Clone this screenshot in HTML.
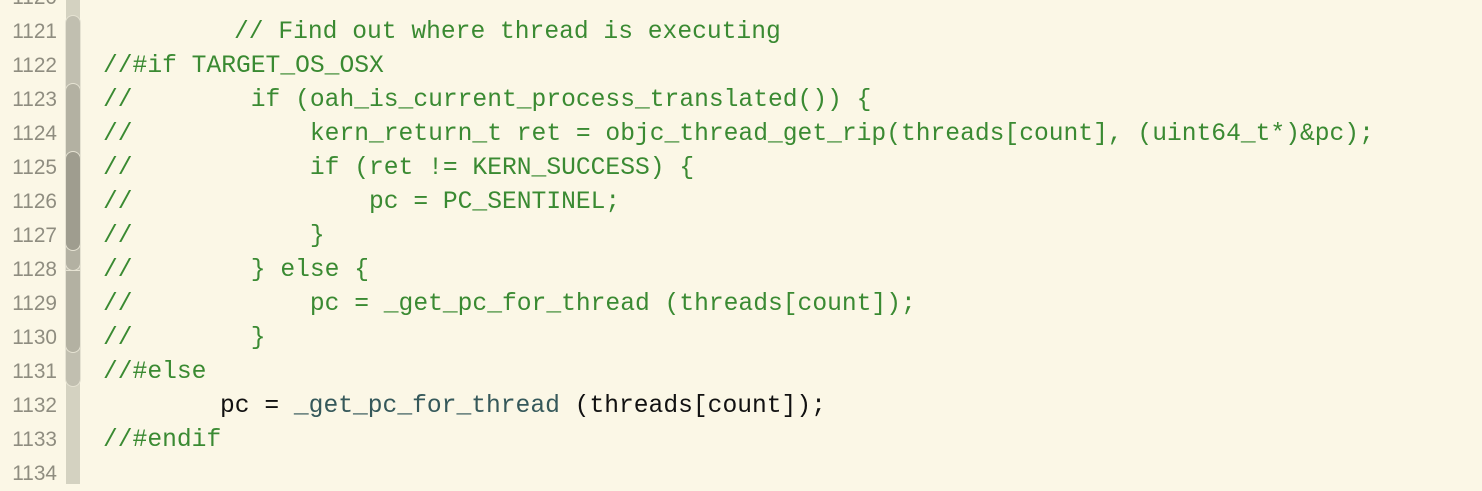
<html><head><style>
body{margin:0;width:1482px;height:484px;background:#fbf7e6;overflow:hidden;position:relative;font-family:"Liberation Mono",monospace}
.n{position:absolute;right:1425px;font-family:"Liberation Sans",sans-serif;font-size:20.8px;color:#8f8d80;line-height:34px;text-align:right;width:60px}
.c{position:absolute;left:103px;font-size:24.63px;line-height:34px;white-space:pre;color:#3a8a32}
.k{color:#111}.f{color:#35585a}
.g{position:absolute;left:66px;width:14px}
</style></head><body>
<div class="g" style="top:0;height:484px;background:#d4d2c1"></div>
<div class="g" style="top:16px;height:370px;background:#c1bfb0;border-radius:7px;box-shadow:0 0 0 1px #e6e3d3"></div>
<div class="g" style="top:84px;height:186px;background:#b3b1a2;border-radius:7px;box-shadow:0 0 0 1px #e6e3d3"></div>
<div class="g" style="top:271px;height:81px;background:#b3b1a2;border-radius:0 0 7px 7px;box-shadow:0 0 0 1px #e6e3d3"></div>
<div class="g" style="top:152px;height:98px;background:#9f9d8f;border-radius:7px;box-shadow:0 0 0 1px #e6e3d3"></div>
<div class="n" style="top:-19px">1120</div>
<div class="n" style="top:15px">1121</div>
<div class="n" style="top:49px">1122</div>
<div class="n" style="top:83px">1123</div>
<div class="n" style="top:117px">1124</div>
<div class="n" style="top:151px">1125</div>
<div class="n" style="top:185px">1126</div>
<div class="n" style="top:219px">1127</div>
<div class="n" style="top:253px">1128</div>
<div class="n" style="top:287px">1129</div>
<div class="n" style="top:321px">1130</div>
<div class="n" style="top:355px">1131</div>
<div class="n" style="top:389px">1132</div>
<div class="n" style="top:423px">1133</div>
<div class="n" style="top:457px">1134</div>
<div class="c" style="top:15px;left:234px">// Find out where thread is executing</div>
<div class="c" style="top:49px">//#if TARGET_OS_OSX</div>
<div class="c" style="top:83px">//        if (oah_is_current_process_translated()) {</div>
<div class="c" style="top:117px">//            kern_return_t ret = objc_thread_get_rip(threads[count], (uint64_t*)&amp;pc);</div>
<div class="c" style="top:151px">//            if (ret != KERN_SUCCESS) {</div>
<div class="c" style="top:185px">//                pc = PC_SENTINEL;</div>
<div class="c" style="top:219px">//            }</div>
<div class="c" style="top:253px">//        } else {</div>
<div class="c" style="top:287px">//            pc = _get_pc_for_thread (threads[count]);</div>
<div class="c" style="top:321px">//        }</div>
<div class="c" style="top:355px">//#else</div>
<div class="c k" style="top:389px;left:220px">pc = <span class="f">_get_pc_for_thread</span> (threads[count]);</div>
<div class="c" style="top:423px">//#endif</div>
</body></html>
